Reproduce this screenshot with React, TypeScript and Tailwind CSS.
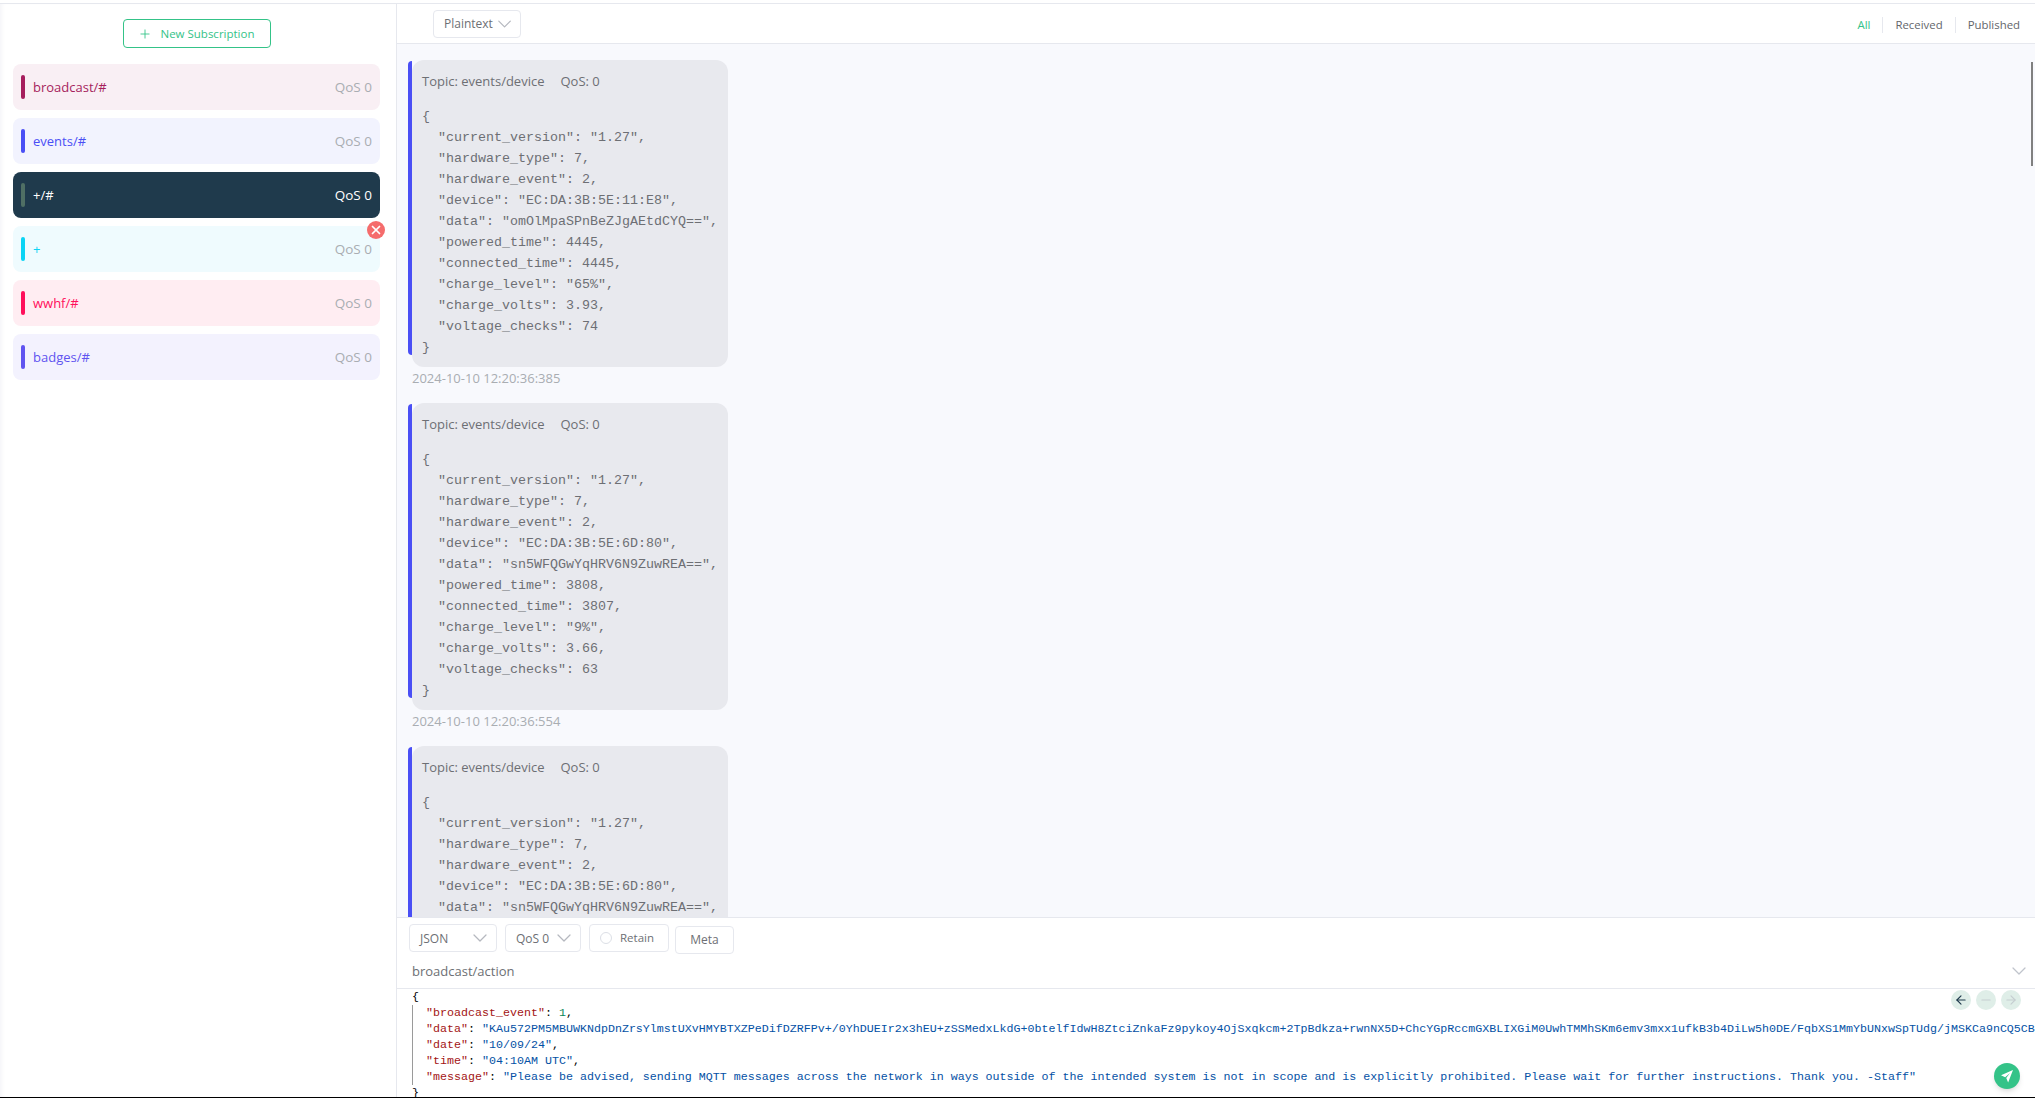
import { ArrowLeft, ArrowRight, ChevronDown, Minus, Plus, X } from "lucide-react"

const sans = "font-['Open_Sans','Noto_Sans',sans-serif]"

const subscriptions = [
  { topic: "broadcast/#", text: "text-[#a61e5d]", bar: "bg-[#a61e5d]", bg: "bg-[#f9eff4]" },
  { topic: "events/#", text: "text-[#4a4ff5]", bar: "bg-[#4a4ff5]", bg: "bg-[#f2f3fe]" },
  { topic: "+/#", text: "text-white", bar: "bg-[#4f6f64]", bg: "bg-[#1f3a4c]", active: true },
  { topic: "+", text: "text-[#0ad4f5]", bar: "bg-[#0ad4f5]", bg: "bg-[#effbfe]", hover: true },
  { topic: "wwhf/#", text: "text-[#ff0f5b]", bar: "bg-[#ff0f5b]", bg: "bg-[#ffedf2]" },
  { topic: "badges/#", text: "text-[#6054f0]", bar: "bg-[#6054f0]", bg: "bg-[#f3f2fe]" },
]

const messages = [
  {
    device: "EC:DA:3B:5E:11:E8",
    data: "omOlMpaSPnBeZJgAEtdCYQ==",
    powered: 4445,
    connected: 4445,
    level: "65%",
    volts: 3.93,
    checks: 74,
    time: "2024-10-10 12:20:36:385",
  },
  {
    device: "EC:DA:3B:5E:6D:80",
    data: "sn5WFQGwYqHRV6N9ZuwREA==",
    powered: 3808,
    connected: 3807,
    level: "9%",
    volts: 3.66,
    checks: 63,
    time: "2024-10-10 12:20:36:554",
  },
  {
    device: "EC:DA:3B:5E:6D:80",
    data: "sn5WFQGwYqHRV6N9ZuwREA==",
    powered: 3808,
    connected: 3807,
    level: "9%",
    volts: 3.66,
    checks: 63,
    time: "2024-10-10 12:20:36:721",
  },
]

type Msg = (typeof messages)[number]

function SubscriptionRow({ item }: { item: (typeof subscriptions)[number] }) {
  return (
    <div className={`relative flex h-[46px] items-center rounded-lg pl-2 pr-2 ${item.bg}`}>
      <span className={`h-6 w-1 rounded-sm ${item.bar}`} />
      <span className={`ml-2 flex-1 pt-0.5 text-[13px] ${item.text}`}>{item.topic}</span>
      <span className={`text-[13.5px] ${item.active ? "text-white" : "text-[#a9adb2]"}`}>QoS 0</span>
      {item.hover && (
        <span className="absolute -right-[5px] -top-[5px] flex size-[18px] items-center justify-center rounded-full bg-[#f56c6c]">
          <X className="size-3.5 text-white" strokeWidth={3} />
        </span>
      )}
    </div>
  )
}

function MessageCard({ msg }: { msg: Msg }) {
  const body = `{
  "current_version": "1.27",
  "hardware_type": 7,
  "hardware_event": 2,
  "device": "${msg.device}",
  "data": "${msg.data}",
  "powered_time": ${msg.powered},
  "connected_time": ${msg.connected},
  "charge_level": "${msg.level}",
  "charge_volts": ${msg.volts},
  "voltage_checks": ${msg.checks}
}`
  return (
    <div className="mb-[14px] w-[316px]">
      <div className="relative rounded-xl bg-[#e8e9ee] pb-[9px] pl-[10px] pt-[11px] text-[#6d6f74]">
        <span className="absolute -left-1 bottom-3 top-px w-1 rounded-l-sm bg-[#4a4ff5]" />
        <div className="h-[35px] text-[13px] leading-5">
          <span>Topic: events/device</span>
          <span className="ml-4">QoS: 0</span>
        </div>
        <pre className="font-['Liberation_Mono',monospace] text-[13.33px] leading-[21px]">{body}</pre>
      </div>
      <div className="h-[22px] text-[13px] leading-[22px] text-[#a9adb2]">{msg.time}</div>
    </div>
  )
}

function Key({ children }: { children: string }) {
  return <span className="text-[#a31515]">{children}</span>
}

function Str({ children }: { children: string }) {
  return <span className="text-[#0451a5]">{children}</span>
}

function NavDot({ children }: { children: React.ReactNode }) {
  return <span className="flex size-5 items-center justify-center rounded-full bg-[#dfeee8]">{children}</span>
}

function Caret({ className = "text-[#b5b8bf]" }: { className?: string }) {
  return <ChevronDown className={`size-6 ${className}`} strokeWidth={1.25} />
}

export default function App() {
  return (
    <div className={`flex h-[1098px] flex-col overflow-hidden border-b border-black bg-white pt-[3px] ${sans}`}>
      <div className="flex min-h-0 flex-1 border-t border-[#e6e8ee]">
        <aside className="w-[397px] shrink-0 border-r border-[#e6e8ee] pl-[13px] pr-4 pt-[15px] shadow-[inset_4px_0_4px_-2px_#f5f5f8]">
          <div className="mb-4 flex justify-center">
            <button className="flex h-[29px] w-[148px] items-center justify-center gap-2 rounded border border-[#34c388] text-[11.5px] text-[#34c388]">
              <Plus className="size-3.5" strokeWidth={1.5} />
              New Subscription
            </button>
          </div>
          <div className="flex flex-col gap-2">
            {subscriptions.map((s) => (
              <SubscriptionRow key={s.topic} item={s} />
            ))}
          </div>
        </aside>

        <main className="flex min-w-0 flex-1 flex-col">
          <header className="flex h-10 shrink-0 items-center justify-between border-b border-[#e6e8ee] pl-9 pr-[15px] text-xs">
            <div className="flex h-7 w-[88px] items-center justify-between rounded border border-[#e6e8ee] pl-2.5 pr-1 text-[#6d6f74]">
              Plaintext
              <Caret />
            </div>
            <div className="mt-0.5 flex items-center text-[11.4px] leading-4">
              <span className="border-r border-[#e6e8ee] pr-3 text-[#34c388]">All</span>
              <span className="border-r border-[#e6e8ee] px-3 text-[#63666b]">Received</span>
              <span className="pl-3 text-[#63666b]">Published</span>
            </div>
          </header>

          <div className="relative min-h-0 flex-1 overflow-hidden bg-[#f8f9fd] pl-[15px] pt-4">
            {messages.map((m, i) => (
              <MessageCard key={i} msg={m} />
            ))}
            <span className="absolute right-0.5 top-[18px] h-[104px] w-0.5 bg-[#808080]" />
          </div>

          <section className="h-[180px] shrink-0 border-t border-[#e6e8ee] bg-white">
            <div className="flex items-start pl-3 pt-[6px] text-xs text-[#6d6f74]">
              <div className="flex h-7 w-[88px] items-center justify-between rounded border border-[#e6e8ee] pl-2.5 pr-1">
                <span className="pt-0.5">JSON</span>
                <Caret />
              </div>
              <div className="ml-2 flex h-7 w-[76px] items-center justify-between rounded border border-[#e6e8ee] pl-2.5 pr-1">
                <span className="pt-0.5">QoS 0</span>
                <Caret />
              </div>
              <div className="ml-2 flex h-7 w-20 items-center rounded border border-[#e6e8ee] pl-2.5 text-[11.5px]">
                <span className="mr-2 size-3 rounded-full border border-[#dcdfe6]" />
                Retain
              </div>
              <div className="ml-1.5 mt-0.5 flex h-7 w-[59px] items-center justify-center rounded border border-[#e6e8ee]">
                Meta
              </div>
            </div>
            <div className="flex h-[35px] items-center justify-between border-b border-[#e6e8ee] pl-[15px] pr-1 text-[13px] text-[#6d6f74]">
              <span className="pt-0.5">broadcast/action</span>
              <Caret className="text-[#c0c4cc]" />
            </div>
            <div className="relative h-[110px] overflow-hidden pl-[15px] font-['DejaVu_Sans_Mono',monospace] text-[11.66px] leading-4 text-black">
              <pre>
                {"{\n"}
                {"  "}<Key>"broadcast_event"</Key>: <span className="text-[#098658]">1</span>,{"\n"}
                {"  "}<Key>"data"</Key>: <Str>"KAu572PM5MBUWKNdpDnZrsYlmstUXvHMYBTXZPeDifDZRFPv+/0YhDUEIr2x3hEU+zSSMedxLkdG+0btelfIdwH8ZtciZnkaFz9pykoy4OjSxqkcm+2TpBdkza+rwnNX5D+ChcYGpRccmGXBLIXGiM0UwhTMMhSKm6emv3mxx1ufkB3b4DiLw5h0DE/FqbXS1MmYbUNxwSpTUdg/jMSKCa9nCQ5CB</Str>{"\n"}
                {"  "}<Key>"date"</Key>: <Str>"10/09/24"</Str>,{"\n"}
                {"  "}<Key>"time"</Key>: <Str>"04:10AM UTC"</Str>,{"\n"}
                {"  "}<Key>"message"</Key>: <Str>"Please be advised, sending MQTT messages across the network in ways outside of the intended system is not in scope and is explicitly prohibited. Please wait for further instructions. Thank you. -Staff"</Str>{"\n"}
                {"}"}
              </pre>
              <span className="absolute left-[15px] top-4 h-20 w-px bg-[#9a9a9a]" />
              <div className="absolute right-[14px] top-[1px] flex gap-[5px] bg-white">
                <NavDot><ArrowLeft className="size-3.5 text-[#1f3a4c]" strokeWidth={2} /></NavDot>
                <NavDot><Minus className="size-3.5 text-[#c5cdd0]" strokeWidth={2} /></NavDot>
                <NavDot><ArrowRight className="size-3.5 text-[#c5cdd0]" strokeWidth={2} /></NavDot>
              </div>
              <span className="absolute bottom-[10px] right-[15px] flex size-[26px] items-center justify-center rounded-full bg-[#34c388] shadow-md">
                <svg viewBox="0 0 24 24" className="size-[18px] fill-white">
                  <path d="M20 4 L4 11 L9.5 13.5 L16 8 L11 14.5 L13.5 20.5 Z" />
                </svg>
              </span>
            </div>
          </section>
        </main>
      </div>
    </div>
  )
}
